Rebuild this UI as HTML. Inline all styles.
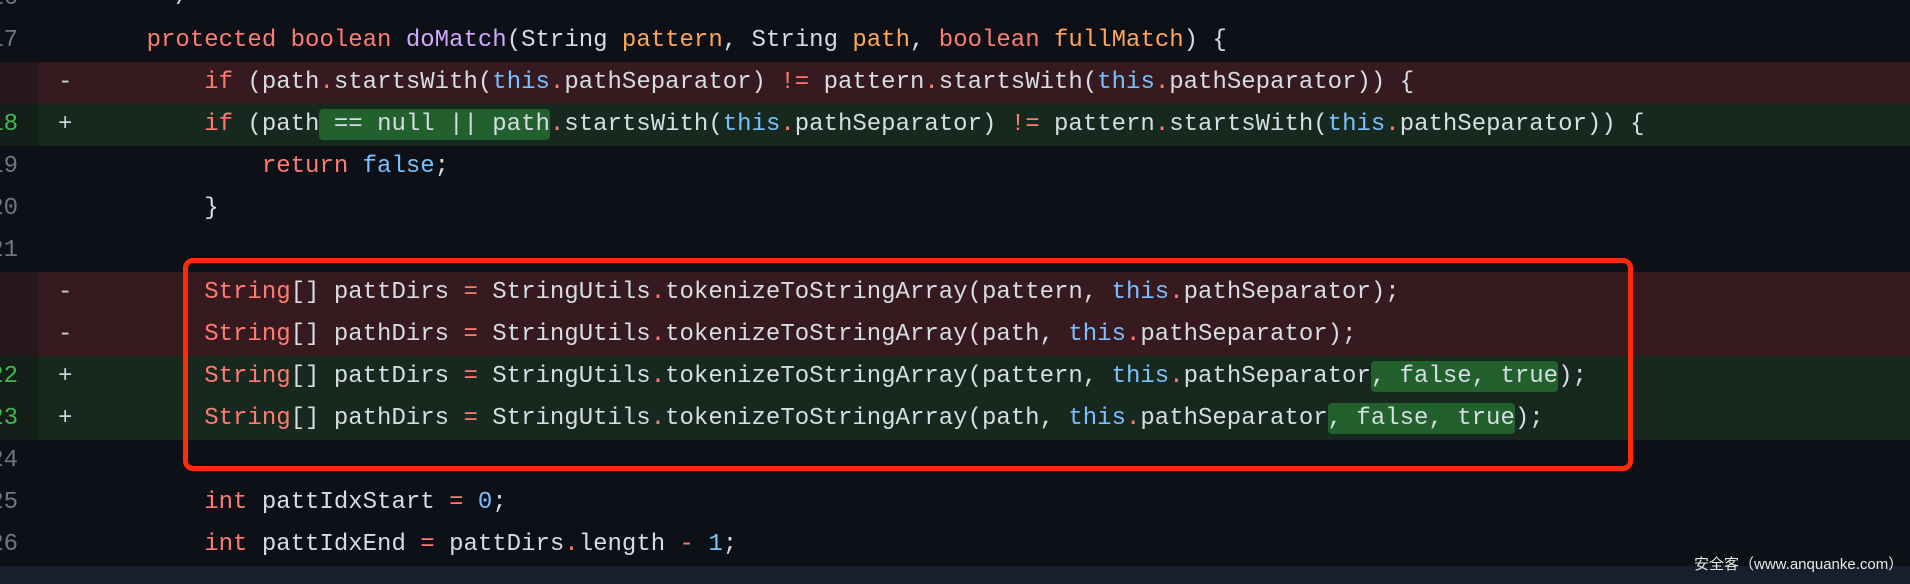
<!DOCTYPE html>
<html><head><meta charset="utf-8"><style>
html,body{margin:0;padding:0;background:#0d1117;width:1910px;height:584px;overflow:hidden;position:relative}
.r{position:absolute;left:0;width:1910px;height:42px;font:24px/42px "Liberation Mono",monospace;color:#d6dde4;white-space:pre}
.g{position:absolute;left:0;top:0;width:38px;height:42px}
.n{position:absolute;right:1892px;top:0;color:#6e7681;text-align:right}
.del{background:#371a1f}.del .g{background:#25171b}
.add{background:#17291f}.add .g{background:#131f18}.add .n{color:#3fb950}
.m{position:absolute;left:58px;top:0;color:#c9d1d9}
.c{position:absolute;left:89px;top:0}
.k{color:#ff7b72}.b{color:#79c0ff}.f{color:#d2a8ff}.o{color:#ffa657}
.h{background:#22602e;border-radius:4px;padding:2px 0}
.box{position:absolute;left:183px;top:258px;width:1440px;height:203px;border:5px solid #ff2a0a;border-radius:10px}
.band{position:absolute;left:0;top:566px;width:1910px;height:18px;background:#161f2d}
.wm{position:absolute;left:1694px;top:556px;font:15px/18px "Liberation Sans","Noto Sans CJK SC",sans-serif;color:#e8e8e8;white-space:pre}
</style></head><body>
<div class="r" style="top:-22px"><span class="n">16</span><span class="c">     */</span></div>
<div class="r" style="top:20px"><span class="n">17</span><span class="c">    <span class="k">protected</span> <span class="k">boolean</span> <span class="f">doMatch</span>(String <span class="o">pattern</span>, String <span class="o">path</span>, <span class="k">boolean</span> <span class="o">fullMatch</span>) {</span></div>
<div class="r del" style="top:62px"><span class="g"></span><span class="m">-</span><span class="c">        <span class="k">if</span> (path<span class="k">.</span>startsWith(<span class="b">this</span><span class="k">.</span>pathSeparator) <span class="k">!=</span> pattern<span class="k">.</span>startsWith(<span class="b">this</span><span class="k">.</span>pathSeparator)) {</span></div>
<div class="r add" style="top:104px"><span class="g"></span><span class="n">18</span><span class="m">+</span><span class="c">        <span class="k">if</span> (path<span class="h"> == null || path</span><span class="k">.</span>startsWith(<span class="b">this</span><span class="k">.</span>pathSeparator) <span class="k">!=</span> pattern<span class="k">.</span>startsWith(<span class="b">this</span><span class="k">.</span>pathSeparator)) {</span></div>
<div class="r" style="top:146px"><span class="n">19</span><span class="c">            <span class="k">return</span> <span class="b">false</span>;</span></div>
<div class="r" style="top:188px"><span class="n">20</span><span class="c">        }</span></div>
<div class="r" style="top:230px"><span class="n">21</span></div>
<div class="r del" style="top:272px"><span class="g"></span><span class="m">-</span><span class="c">        <span class="k">String</span>[] pattDirs <span class="k">=</span> StringUtils<span class="k">.</span>tokenizeToStringArray(pattern, <span class="b">this</span><span class="k">.</span>pathSeparator);</span></div>
<div class="r del" style="top:314px"><span class="g"></span><span class="m">-</span><span class="c">        <span class="k">String</span>[] pathDirs <span class="k">=</span> StringUtils<span class="k">.</span>tokenizeToStringArray(path, <span class="b">this</span><span class="k">.</span>pathSeparator);</span></div>
<div class="r add" style="top:356px"><span class="g"></span><span class="n">22</span><span class="m">+</span><span class="c">        <span class="k">String</span>[] pattDirs <span class="k">=</span> StringUtils<span class="k">.</span>tokenizeToStringArray(pattern, <span class="b">this</span><span class="k">.</span>pathSeparator<span class="h">, false, true</span>);</span></div>
<div class="r add" style="top:398px"><span class="g"></span><span class="n">23</span><span class="m">+</span><span class="c">        <span class="k">String</span>[] pathDirs <span class="k">=</span> StringUtils<span class="k">.</span>tokenizeToStringArray(path, <span class="b">this</span><span class="k">.</span>pathSeparator<span class="h">, false, true</span>);</span></div>
<div class="r" style="top:440px"><span class="n">24</span></div>
<div class="r" style="top:482px"><span class="n">25</span><span class="c">        <span class="k">int</span> pattIdxStart <span class="k">=</span> <span class="b">0</span>;</span></div>
<div class="r" style="top:524px"><span class="n">26</span><span class="c">        <span class="k">int</span> pattIdxEnd <span class="k">=</span> pattDirs<span class="k">.</span>length <span class="k">-</span> <span class="b">1</span>;</span></div>
<div class="band"></div>
<div class="box"></div>
<div class="wm">安全客（www.anquanke.com）</div>
</body></html>
